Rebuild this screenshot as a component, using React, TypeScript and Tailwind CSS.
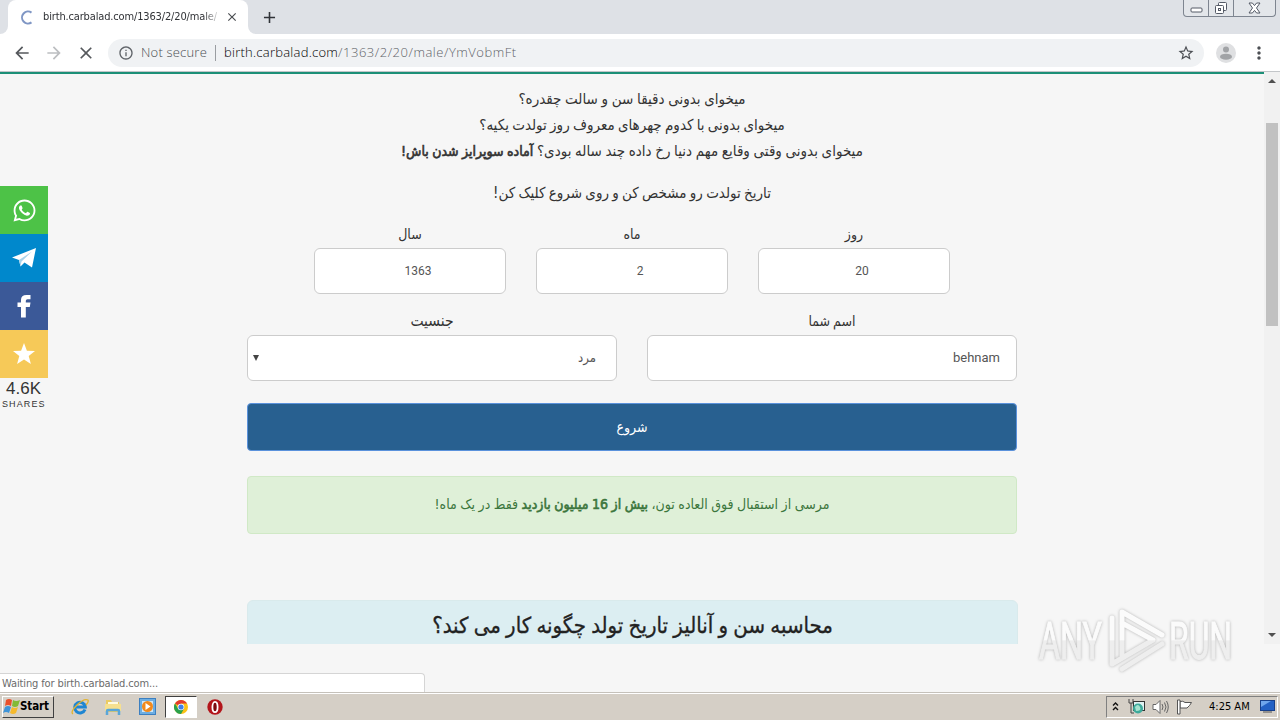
import type { ReactNode } from "react";
import { FaWhatsapp } from "react-icons/fa";
import { MdStarBorder, MdOutlineInfo, MdArrowBack, MdArrowForward, MdClose, MdAdd, MdMoreVert } from "react-icons/md";

const CaptionButtons = () => (
  <div className="flex h-[17px] w-[93px] overflow-hidden rounded-b-[4px] border border-t-0 border-[#7e8590] bg-[#e3e6ea]">
    <div className="flex w-[25px] items-center justify-center border-r border-[#7e8590]">
      <svg width="13" height="6" viewBox="0 0 13 6" className="mt-1">
        <rect x="1" y="1" width="11" height="4" rx="1" fill="#fff" stroke="#545a66" />
      </svg>
    </div>
    <div className="flex w-[25px] items-center justify-center border-r border-[#7e8590]">
      <svg width="14" height="14" viewBox="0 0 14 14" fill="#fff" stroke="#545a66">
        <rect x="4.5" y="1.5" width="8" height="8" rx="1" />
        <rect x="1.5" y="4.5" width="8" height="8" rx="1" />
        <rect x="4.5" y="7.5" width="2" height="2" />
      </svg>
    </div>
    <div className="flex flex-1 items-center justify-center">
      <svg width="13" height="12" viewBox="0 0 13 12" className="mb-px">
        <path d="M1 1h3.4l2.1 2.6L8.600 1H12L8.500 6 12 11H8.600L6.500 8.400 4.400 11H1L4.500 6z" fill="#fff" stroke="#545a66" />
      </svg>
    </div>
  </div>
);

const TabStrip = () => (
  <div className="flex h-[34px] items-start justify-between bg-[#dee1e6]">
    <div className="flex h-full items-center">
      <div className="h-full w-2 bg-white">
        <div className="h-full w-2 rounded-br-lg bg-[#dee1e6]" />
      </div>
      <div className="flex h-full w-[240px] items-center rounded-t-lg bg-white pl-3">
        <svg width="15" height="15" viewBox="0 0 15 15" className="shrink-0">
          <path d="M11.500 2.600A6 6 0 1 0 11.500 12.400" fill="none" stroke="#7f96c4" strokeWidth="2" />
        </svg>
        <div className="mt-px ml-2 w-[178px] whitespace-nowrap font-['DejaVu_Sans_Condensed','DejaVu_Sans',sans-serif] text-[11px] tracking-[-0.15px] text-[#303236] [mask-image:linear-gradient(to_right,#000_90%,transparent)]">
          birth.carbalad.com/1363/2/20/male/
        </div>
        <MdClose className="ml-1 size-[14px] shrink-0 text-[#4a4d51]" />
      </div>
      <div className="h-full w-2 bg-white">
        <div className="h-full w-2 rounded-bl-lg bg-[#dee1e6]" />
      </div>
      <MdAdd className="ml-1 size-[19px] text-[#303338]" />
    </div>
    <div className="pr-1">
      <CaptionButtons />
    </div>
  </div>
);

const Toolbar = () => (
  <div className="flex h-[38px] items-center border-b border-[#c3c6c9] bg-white pl-3">
    <MdArrowBack className="size-5 text-[#55585c]" />
    <MdArrowForward className="ml-3 size-5 text-[#bcbec1]" />
    <MdClose className="ml-3 size-5 text-[#55585c]" />
    <div className="ml-3 flex h-7 w-[1096px] items-center rounded-full bg-[#f0f2f4] pl-[10px] font-['Open_Sans','Noto_Sans',sans-serif] text-[13px] font-light whitespace-nowrap">
      <MdOutlineInfo className="size-4 text-[#5f6368]" />
      <span className="ml-[7px] w-[67px] tracking-[0.2px] text-[#4a4e53]">Not secure</span>
      <span className="ml-[7px] h-4 w-px bg-[#9a9da1]" />
      <span className="ml-2 tracking-[0.25px] text-black">
        birth.carbalad.com
        <span className="tracking-[0.52px] text-[#5f6368]">/1363/2/20/male/YmVobmFt</span>
      </span>
      <MdStarBorder className="mr-[9px] ml-auto size-[18px] text-[#4c4f54]" />
    </div>
    <svg width="20" height="20" viewBox="0 0 20 20" className="ml-3">
      <circle cx="10" cy="10" r="10" fill="#dfe0e2" />
      <circle cx="10" cy="6.500" r="3" fill="#a1a3a6" />
      <ellipse cx="10" cy="13.700" rx="6" ry="3" fill="#a1a3a6" />
    </svg>
    <MdMoreVert className="ml-[13px] size-5 text-[#4c4f54]" />
  </div>
);

const shareItem = "flex size-12 items-center justify-center text-white";

const ShareBar = () => (
  <div className="absolute top-[114px] left-0 w-12">
    <div className={`${shareItem} bg-[#4dc247]`}>
      <FaWhatsapp className="size-[25px]" />
    </div>
    <div className={`${shareItem} bg-[#0088cc]`}>
      <svg width="24" height="22" viewBox="0 0 24 22">
        <path d="M0 10.500L24 1 20 20.500 12.500 15.500 8.500 19.500 7 13z" fill="#fff" />
        <path d="M7 13L20 4.500 9.500 14.500 8.500 19.500z" fill="#a9d3ea" />
      </svg>
    </div>
    <div className={`${shareItem} bg-[#3b5998]`}>
      <svg width="14" height="24" viewBox="0 0 14 24">
        <path d="M4 23.500V13H.5V8.500H4V5.800Q4 1 9.500 1H13.500V5.200H10.500Q8.800 5.200 8.800 6.800V8.500H13.500L12.800 13H8.800V23.500z" fill="#fff" />
      </svg>
    </div>
    <div className={`${shareItem} bg-[#f6c958]`}>
      <svg width="24" height="24" viewBox="0 0 24 24">
        <path d="M12 1l2.900 7.700 8.100.3-6.300 5 2.200 7.900-6.900-4.500-6.900 4.500L7.300 14 1 9l8.100-.3z" fill="#fff" />
      </svg>
    </div>
    <div className="w-12 font-['Liberation_Sans',sans-serif] text-[#333]">
      <div className="h-[20px] w-[47px] text-center text-[17px] leading-[21px]">4.6K</div>
      <div className="pl-[2px] text-[9px] leading-[12px] tracking-[1.1px]">SHARES</div>
    </div>
  </div>
);

type FieldProps = { label: string; children: ReactNode; className: string };

const Field = ({ label, children, className }: FieldProps) => (
  <div className={className}>
    <div className="h-[26px] text-center leading-[25px] text-[#333]">{label}</div>
    {children}
  </div>
);

const box =
  "flex h-[46px] items-center rounded-md border border-[#ccc] bg-white text-[#555]";

const NumberBox = ({ value }: { value: number }) => (
  <div className={`${box} justify-center pl-4 font-[Roboto,sans-serif] text-[12px]`}>{value}</div>
);

const BirthForm = () => (
  <div>
    <div className="mt-4 flex justify-center gap-[30px] text-[14px]">
      <Field label="روز" className="w-48">
        <NumberBox value={20} />
      </Field>
      <Field label="ماه" className="w-48">
        <NumberBox value={2} />
      </Field>
      <Field label="سال" className="w-48">
        <NumberBox value={1363} />
      </Field>
    </div>
    <div className="mt-[15px] flex gap-[30px] text-[14px]">
      <Field label="اسم شما" className="w-[370px]">
        <div className={`${box} pr-4 font-[Roboto,sans-serif] text-[13px]`}>behnam</div>
      </Field>
      <Field label="جنسیت" className="w-[370px] text-[15.5px]">
        <div className={`${box} justify-between pr-5 pl-[5px]`}>
          <span className="text-[13px]">مرد</span>
          <svg width="6" height="6" viewBox="0 0 6 6">
            <path d="M0 0h6L3 6z" fill="#444" />
          </svg>
        </div>
      </Field>
    </div>
    <button className="mt-[22px] flex h-12 w-[770px] items-center justify-center rounded-[4px] border border-[#5b92dc] bg-[#286090] pb-px text-[14px] text-white">
      شروع
    </button>
  </div>
);

const strong = "font-normal [-webkit-text-stroke:0.6px_currentColor]";

const Page = () => (
  <div
    dir="rtl"
    className="h-full flex-1 overflow-hidden border-t-2 border-[#1c8f77] bg-[#f6f6f6] pt-3 font-['DejaVu_Sans_Condensed','DejaVu_Sans',sans-serif]"
  >
    <div className="mx-auto w-[770px] text-center text-[15px] leading-[26px] whitespace-nowrap text-[#333] [word-spacing:-1px]">
      <div>
        <p className="[word-spacing:-0.6px]">میخوای بدونی دقیقا سن و سالت چقدره؟</p>
        <p>میخوای بدونی با کدوم چهرهای معروف روز تولدت یکیه؟</p>
        <p className="[word-spacing:-0.6px]">
          میخوای بدونی وقتی وقایع مهم دنیا رخ داده چند ساله بودی؟{" "}
          <b className={`${strong} text-[14px]`}>آماده سوپرایز شدن باش!</b>
        </p>
      </div>
      <p className="mt-4">تاریخ تولدت رو مشخص کن و روی شروع کلیک کن!</p>
      <BirthForm />
      <div className="mt-[25px] h-[58px] rounded-[4px] border border-[#d0e9c6] bg-[#dff0d8] text-[14px] leading-[55px] text-[#3c763d] [word-spacing:-0.5px]">
        مرسی از استقبال فوق العاده تون، <b className={strong}>بیش از 16 میلیون بازدید</b> فقط در یک ماه!
      </div>
      <div className="mt-[66px] mr-[-1px] h-[60px] w-[771px] rounded-md border border-[#d9eaec] bg-[#dceef2] text-[22px] leading-[49px] text-[#222] [-webkit-text-stroke:0.3px_currentColor]">
        محاسبه سن و آنالیز تاریخ تولد چگونه کار می کند؟
      </div>
    </div>
  </div>
);

const Scrollbar = () => (
  <div className="flex h-full w-4 flex-col items-center bg-[#f1f1f1]">
    <svg width="8" height="18" viewBox="0 0 8 18">
      <path d="M0 11L4 7l4 4z" fill="#505050" />
    </svg>
    <div className="mt-[33px] h-[203px] w-3 bg-[#c1c1c1]" />
    <svg width="8" height="18" viewBox="0 0 8 18" className="mt-auto">
      <path d="M0 7l4 4 4-4z" fill="#505050" />
    </svg>
  </div>
);

const Watermark = () => (
  <svg
    width="212"
    height="80"
    viewBox="0 0 212 80"
    className="absolute top-[600px] left-[1030px] [filter:drop-shadow(0_0_1.5px_rgba(0,0,0,0.28))]"
  >
    <defs>
      <linearGradient id="wm" x1="0" y1="0" x2="0" y2="80" gradientUnits="userSpaceOnUse">
        <stop offset="0.5" stopColor="#fbfbfb" />
        <stop offset="0.51" stopColor="#eeeeee" />
      </linearGradient>
    </defs>
    <g fill="url(#wm)" stroke="url(#wm)" strokeWidth="1" fontFamily="Roboto, sans-serif" fontSize="52">
      <text x="9" y="59" textLength="63" lengthAdjust="spacingAndGlyphs">ANY</text>
      <text x="139" y="59" textLength="63" lengthAdjust="spacingAndGlyphs">RUN</text>
    </g>
    <g fill="none" stroke="url(#wm)" strokeWidth="5" strokeLinejoin="round" strokeLinecap="round">
      <path d="M92 56V12L132 35M92 23L123 40 82 64V18" />
      <path d="M92 69L132 44" />
    </g>
  </svg>
);

const StartFlag = () => (
  <svg width="18" height="17" viewBox="0 0 18 17" className="shrink-0">
    <path d="M3 2q3-2 6 0L8 8Q5 6 2 8z" fill="#e9502b" />
    <path d="M10 2q3 2 7 0l-2 6q-3 2-6 0z" fill="#82ba36" />
    <path d="M2 9q3-2 6 0l-2 6q-3-2-6 0z" fill="#3f94d8" />
    <path d="M9 9q3 2 6 0l-2 6q-3 2-6 0z" fill="#f5b92c" />
  </svg>
);

const QuickLaunch = () => (
  <div className="flex h-full items-center">
    <svg width="18" height="18" viewBox="0 0 18 18" className="ml-[17px]">
      <path d="M14 11.500A5.300 5.300 0 1 1 14.300 9H5" fill="none" stroke="#1f86d2" strokeWidth="3" />
      <path d="M2 16Q-1 14 6 7T17 2q1 2-2 5" fill="none" stroke="#e3b32d" strokeWidth="1.300" />
    </svg>
    <svg width="18" height="18" viewBox="0 0 18 18" className="ml-[15px]">
      <path d="M2 2h5l1 2h7v10H2z" fill="#eacb62" />
      <path d="M4 4h10v5H4z" fill="#fffbe0" />
      <path d="M1 6h16v7H1z" fill="#f6e08f" />
      <path d="M3 17v-4q0-1 1-1h10q1 0 1 1v4" fill="none" stroke="#5aa6d8" strokeWidth="2.500" />
    </svg>
    <svg width="17" height="17" viewBox="0 0 17 17" className="ml-[17px]">
      <rect x=".5" y=".5" width="16" height="16" fill="#6daee2" stroke="#3c7fc0" />
      <rect x="3" y="3" width="11" height="11" fill="#cfe6f7" />
      <circle cx="8.500" cy="8.500" r="5.500" fill="#f28a1c" />
      <path d="M6.500 5l5 3.500-5 3.500z" fill="#fff" />
    </svg>
    <div className="ml-[9px] flex h-[22px] w-8 items-center justify-center border border-t-[#404040] border-r-white border-b-white border-l-[#404040] bg-white">
      <svg width="14" height="14" viewBox="0 0 14 14">
        <circle cx="7" cy="7" r="7" fill="#fbc116" />
        <path d="M7 7L1 3.400A7 7 0 0 1 13 3.500H7z" fill="#e33b2e" />
        <path d="M1 3.400A7 7 0 0 0 7 14l3-5.300-6-.2z" fill="#2aa14c" />
        <circle cx="7" cy="7" r="3.300" fill="#fff" />
        <circle cx="7" cy="7" r="2.600" fill="#3f7fe8" />
      </svg>
    </div>
    <svg width="16" height="16" viewBox="0 0 16 16" className="ml-[10px]">
      <circle cx="8" cy="8" r="7.700" fill="#b3151b" />
      <ellipse cx="8" cy="8" rx="2.600" ry="5.200" fill="#7d0a0f" stroke="#fff" strokeWidth="1.800" />
    </svg>
  </div>
);

const Tray = () => (
  <div className="flex h-[22px] w-[172px] items-center border border-t-[#808080] border-r-white border-b-white border-l-[#808080] pl-1">
    <svg width="9" height="12" viewBox="0 0 9 12" fill="none" stroke="#111" strokeWidth="1.400">
      <path d="M2 4.500L4.500 2 7 4.500M2 9l2.500-2.500L7 9" />
    </svg>
    <svg width="17" height="17" viewBox="0 0 17 17" className="ml-2">
      <rect x="5.500" y="3.500" width="11" height="9" fill="#dff2f2" stroke="#333" />
      <circle cx="10" cy="10.500" r="5" fill="#3da99a" />
      <path d="M7 9q3-4 5 0t-4 4" fill="#a5e3cf" />
      <path d="M1 1v4h4V1M3 5v10h3" fill="none" stroke="#444" />
    </svg>
    <svg width="17" height="16" viewBox="0 0 17 16" className="ml-[7px]" stroke="#666">
      <path d="M1 5.500h3L8 1.500v13l-4-4H1z" fill="#fff" />
      <path d="M10 5q2 3 0 6M12.500 3.500q3 4.500 0 9M14.500 2q3.500 6 0 12" fill="none" />
    </svg>
    <svg width="17" height="16" viewBox="0 0 17 16" className="ml-[7px]" fill="#fff" stroke="#555">
      <path d="M4 2.500q3-1 5 1h6.500q-1.500 3-4.500 5.500H4z" />
      <path d="M1.500 1H4v14H1.500z" />
    </svg>
    <div className="mt-[2px] ml-4 w-[42px] font-['DejaVu_Sans_Condensed','DejaVu_Sans',sans-serif] text-[11px] whitespace-nowrap text-black">
      4:25 AM
    </div>
    <svg width="15" height="13" viewBox="0 0 15 13" className="ml-[9px]">
      <rect x=".5" y=".5" width="14" height="10" fill="#2361c4" stroke="#17408a" />
      <path d="M1 1h10L1 7z" fill="#6fa6ec" />
      <path d="M3 12h9" stroke="#555" />
    </svg>
  </div>
);

const Taskbar = () => (
  <div className="flex h-7 items-center justify-between border-t border-[#c5c1ba] bg-[#d5cfc6] shadow-[inset_0_1px_0_#fff]">
    <div className="flex h-full items-center pl-[2px]">
      <div className="flex h-[22px] w-[52px] items-center border border-t-white border-r-[#404040] border-b-[#404040] border-l-white font-['DejaVu_Sans_Condensed','DejaVu_Sans',sans-serif] text-[11.5px] font-bold text-black">
        <StartFlag />
        <span className="mt-px ml-[-1px] tracking-[-0.1px]">Start</span>
      </div>
      <QuickLaunch />
    </div>
    <div className="pr-[2px]">
      <Tray />
    </div>
  </div>
);

export default function App() {
  return (
    <div className="relative flex h-[720px] w-[1280px] flex-col overflow-hidden bg-[#f6f6f6]">
      <TabStrip />
      <Toolbar />
      <div className="relative flex h-[572px]">
        <Page />
        <Scrollbar />
        <ShareBar />
      </div>
      <div className="flex flex-1 items-end">
        <div className="h-[19px] w-[425px] rounded-tr-[4px] border border-b-0 border-l-0 border-[#d5d5d5] bg-white pl-[2px] font-['DejaVu_Sans_Condensed','DejaVu_Sans',sans-serif] text-[11px] leading-[19px] tracking-[-0.12px] text-[#6b6b6b]">
          Waiting for birth.carbalad.com...
        </div>
      </div>
      <Taskbar />
      <Watermark />
    </div>
  );
}
